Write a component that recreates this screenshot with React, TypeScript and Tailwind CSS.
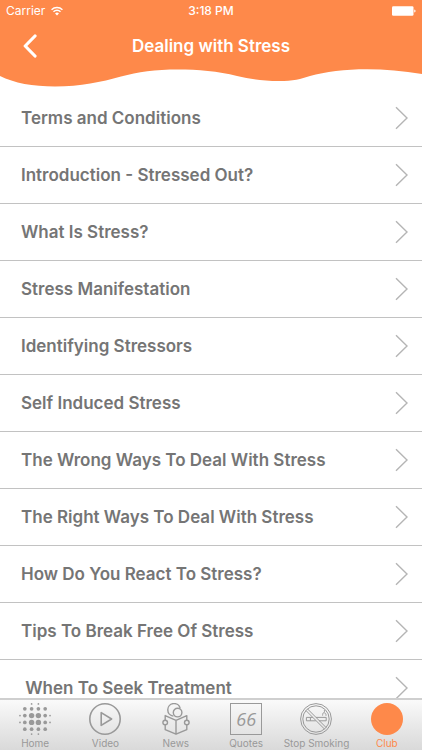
import { useState } from 'react'
import type { ReactNode } from 'react'
import clsx from 'clsx'

const topics = [
  'Terms and Conditions',
  'Introduction - Stressed Out?',
  'What Is Stress?',
  'Stress Manifestation',
  'Identifying Stressors',
  'Self Induced Stress',
  'The Wrong Ways To Deal With Stress',
  'The Right Ways To Deal With Stress',
  'How Do You React To Stress?',
  'Tips To Break Free Of Stress',
  '\u00a0When To Seek Treatment',
]

const HomeIcon = () => {
  const dots = [
    [9, 9, 2], [16, 9, 2], [23, 9, 2], [30, 9, 2],
    [9, 16, 2], [16, 16, 3], [23, 16, 3], [30, 16, 2],
    [9, 23, 2], [16, 23, 3], [23, 23, 3], [30, 23, 2],
    [9, 30, 2], [16, 30, 2], [23, 30, 2], [30, 30, 2],
    [16, 4, 1], [23, 4, 1], [16, 35, 1], [23, 35, 1],
    [4, 16, 1], [4, 23, 1], [35, 16, 1], [35, 23, 1],
  ]
  return (
    <svg viewBox="3 3 33 33" className="size-8" fill="currentColor" aria-hidden="true">
      {dots.map(([x, y, r]) => (
        <circle key={`${x}-${y}`} cx={x} cy={y} r={r === 3 ? 2.8 : r === 2 ? 1.9 : 0.9} />
      ))}
    </svg>
  )
}

const VideoIcon = () => (
  <svg viewBox="0 0 32 32" className="size-8" fill="none" stroke="currentColor" strokeWidth="1.6" aria-hidden="true">
    <circle cx="16" cy="16" r="15.2" />
    <path d="M12.2 9.6v12.8L22.6 16z" strokeLinejoin="round" />
  </svg>
)

const NewsIcon = () => (
  <svg viewBox="0 0 32 32" className="size-8" fill="none" stroke="currentColor" strokeWidth="1.4" strokeLinejoin="round" aria-hidden="true">
    <path d="M13.4 13.1A6.3 6.3 0 1 1 20.2 5.4" />
    <circle cx="17.6" cy="9.6" r="4.3" />
    <path d="M16 17.4 5.2 12.6v4.6M5.2 21.8v4.8L16 31.2l10.800-4.600v-4.800M26.800 17.200v-4.600L16 17.400v13.800" />
    <circle cx="5.200" cy="19.500" r="2.300" />
    <circle cx="26.800" cy="19.500" r="2.300" />
  </svg>
)

const QuotesIcon = () => (
  <span className="flex size-8 items-center justify-center border border-current font-['Open_Sans','Noto_Sans',sans-serif] text-lg leading-none italic">
    66
  </span>
)

const SmokingIcon = () => (
  <svg viewBox="0 0 32 32" className="size-8" fill="none" stroke="currentColor" strokeWidth="1" aria-hidden="true">
    <circle cx="16" cy="16" r="15.4" />
    <circle cx="16" cy="16" r="13.2" />
    <path d="m6 7.6 18.6 18.6M7.600 6l18.600 18.600" />
    <path d="M6.400 14.400h6.400M16 14.400h10.200v3.400H19M15.800 17.800H6.400v-3.400M10.400 14.400v3.400" />
    <path d="M22.600 12.600c.2-1.600-.2-2.400 1-2.800 1.200-.3.9-1.600.7-2.800M26 12.800c.1-1.600-.2-2.600-1.600-2.900" />
  </svg>
)

const ClubIcon = () => <span className="size-8 rounded-full bg-current" />

const tabs: { label: string; icon: ReactNode }[] = [
  { label: 'Home', icon: <HomeIcon /> },
  { label: 'Video', icon: <VideoIcon /> },
  { label: 'News', icon: <NewsIcon /> },
  { label: 'Quotes', icon: <QuotesIcon /> },
  { label: 'Stop Smoking', icon: <SmokingIcon /> },
  { label: 'Club', icon: <ClubIcon /> },
]

const StatusBar = () => (
  <div className="grid h-[22px] grid-cols-3 items-center px-1.5 text-xs">
    <div className="flex items-center gap-1.5">
      <span>Carrier</span>
      <svg viewBox="0 0 13 10" className="h-2.5 w-3" fill="none" stroke="currentColor" strokeWidth="1.5" aria-hidden="true">
        <path d="M.6 3.6a8.4 8.4 0 0 1 11.8 0M2.7 5.8a5.4 5.4 0 0 1 7.6 0" />
        <path d="M6.5 9.8 4.4 7.6a3 3 0 0 1 4.2 0z" fill="currentColor" stroke="none" />
      </svg>
    </div>
    <span className="text-center font-medium">3:18 PM</span>
    <svg viewBox="0 0 25 10" className="h-2.5 w-6 justify-self-end" fill="currentColor" aria-hidden="true">
      <rect width="22.4" height="10" rx="1.4" />
      <path d="M23.2 3.4c1.8.3 1.8 2.9 0 3.2z" />
    </svg>
  </div>
)

const Header = () => (
  <header className="shrink-0 text-white">
    <div className="bg-[#fe894a]">
      <StatusBar />
      <div className="grid h-12 grid-cols-[60px_1fr_60px] items-center">
        <button type="button" aria-label="Back" className="flex h-full items-center justify-center">
          <svg viewBox="0 0 14 24" className="h-6 w-3.5" fill="none" stroke="currentColor" strokeWidth="3.2" strokeLinecap="round" strokeLinejoin="round" aria-hidden="true">
            <path d="M12 2 2.200 12 12 22" />
          </svg>
        </button>
        <h1 className="text-center text-[17px] leading-6 font-semibold">Dealing with Stress</h1>
      </div>
    </div>
    <div className="-mt-1">
      <svg viewBox="0 0 422 24" preserveAspectRatio="none" className="block h-6 w-full bg-white" aria-hidden="true">
        <path
          fill="#fe894a"
          d="M0 0H422V8C403 5 385 3.300 367 3.300C345 3.300 325 6 310 10C301 13 293 15 279 15C263 15 250 13 237 10C218 5 198 3.500 178 3.500C155 3.500 138 6 121 10.500C101 16 81 20.500 55 20.500C33 20.500 14 17 0 10Z"
        />
      </svg>
    </div>
  </header>
)

export default function App() {
  const [activeTab, setActiveTab] = useState('Club')

  return (
    <div className="flex h-screen w-full flex-col overflow-hidden bg-white font-['Inter','Liberation_Sans',sans-serif]">
      <Header />
      <main className="min-h-0 flex-1 overflow-y-auto [scrollbar-width:none]">
        <ul>
          {topics.map(topic => (
            <li key={topic} className="border-b border-[#c2c2c2]">
              <button
                type="button"
                className="flex h-14 w-full items-center justify-between pr-3.5 pl-[21px] text-left text-[17px] leading-6 font-semibold text-[#757575]"
              >
                {topic}
                <svg viewBox="0 0 13 24" className="h-6 w-[13px] shrink-0" fill="none" stroke="#b5b5b5" strokeWidth="1.4" aria-hidden="true">
                  <path d="M1 1.200 12 12 1 22.800" />
                </svg>
              </button>
            </li>
          ))}
        </ul>
      </main>
      <nav className="flex shrink-0 border-t-2 border-[#cfcfcf] bg-linear-to-b from-[#fafafa] to-[#d9d9d9] pt-[3px]">
        {tabs.map(({ label, icon }) => (
          <button
            key={label}
            type="button"
            aria-current={activeTab === label ? 'page' : undefined}
            onClick={() => setActiveTab(label)}
            className={clsx(
              'flex min-w-0 flex-1 flex-col items-center gap-0.5 text-[10px] leading-[13px] whitespace-nowrap',
              activeTab === label ? 'text-[#fe894a]' : 'text-[#999999]',
            )}
          >
            {icon}
            {label}
          </button>
        ))}
      </nav>
    </div>
  )
}
